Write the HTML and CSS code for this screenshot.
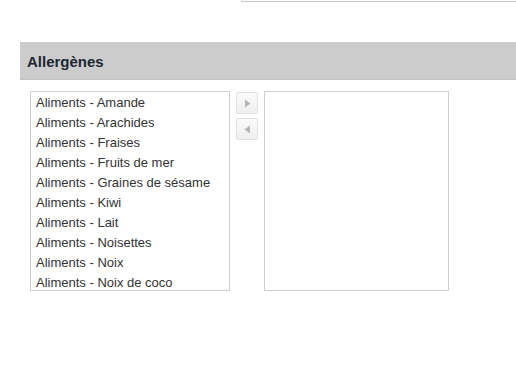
FILE: index.html
```html
<!DOCTYPE html>
<html lang="fr">
<head>
<meta charset="utf-8">
<link rel="stylesheet" href="styles.css">
</head>
<body>
<div class="top">
  <div class="search"></div>
</div>
<section class="panel">
  <h2 class="panel-title">Allergènes</h2>
  <div class="dual">
    <ul class="list">
      <li>Aliments - Amande</li>
      <li>Aliments - Arachides</li>
      <li>Aliments - Fraises</li>
      <li>Aliments - Fruits de mer</li>
      <li>Aliments - Graines de sésame</li>
      <li>Aliments - Kiwi</li>
      <li>Aliments - Lait</li>
      <li>Aliments - Noisettes</li>
      <li>Aliments - Noix</li>
      <li>Aliments - Noix de coco</li>
    </ul>
    <div class="buttons">
      <button class="btn" aria-label="Ajouter">
        <svg width="7" height="9" viewBox="0 0 7 9"><path d="M1 0.5 L6.5 4.5 L1 8.5 Z" fill="#b5b5b5"/></svg>
      </button>
      <button class="btn" aria-label="Retirer">
        <svg width="7" height="9" viewBox="0 0 7 9"><path d="M6 0.5 L0.5 4.5 L6 8.5 Z" fill="#b5b5b5"/></svg>
      </button>
    </div>
    <ul class="list list-right"></ul>
  </div>
</section>
</body>
</html>
```
FILE: styles.css
```css
html, body {
  margin: 0;
  padding: 0;
  background: #ffffff;
  font-family: Arial, "Liberation Sans", sans-serif;
}
.top {
  height: 42px;
  display: flex;
  justify-content: flex-end;
}
.search {
  width: 274px;
  height: 1px;
  border: 1px solid #c8c8c8;
  border-top: none;
  border-right: none;
  border-bottom-left-radius: 3px;
}
.panel {
  margin-left: 20px;
}
.panel-title {
  margin: 0;
  height: 38px;
  background: #cccccc;
  border-bottom: 1px solid #c2c2c2;
  box-sizing: border-box;
  padding: 11px 0 0 7px;
  font-size: 15px;
  font-weight: bold;
  color: #1c2733;
}
.dual {
  display: flex;
  align-items: flex-start;
  padding: 11px 0 0 10px;
}
.list {
  list-style: none;
  margin: 0;
  padding: 1px 0 0 0;
  width: 200px;
  height: 200px;
  box-sizing: border-box;
  border: 1px solid #cfcfcf;
  overflow: hidden;
}
.list li {
  height: 20px;
  line-height: 20px;
  padding-left: 5px;
  font-size: 13px;
  color: #333333;
  white-space: nowrap;
}
.list-right {
  width: 185px;
}
.buttons {
  display: flex;
  flex-direction: column;
  gap: 4px;
  padding: 1px 6px 0 6px;
}
.btn {
  width: 22px;
  height: 22px;
  padding: 0;
  margin: 0;
  display: flex;
  align-items: center;
  justify-content: center;
  border: 1px solid #e2e2e2;
  border-radius: 2px;
  background: linear-gradient(#fbfbfb, #efefef);
}
```
